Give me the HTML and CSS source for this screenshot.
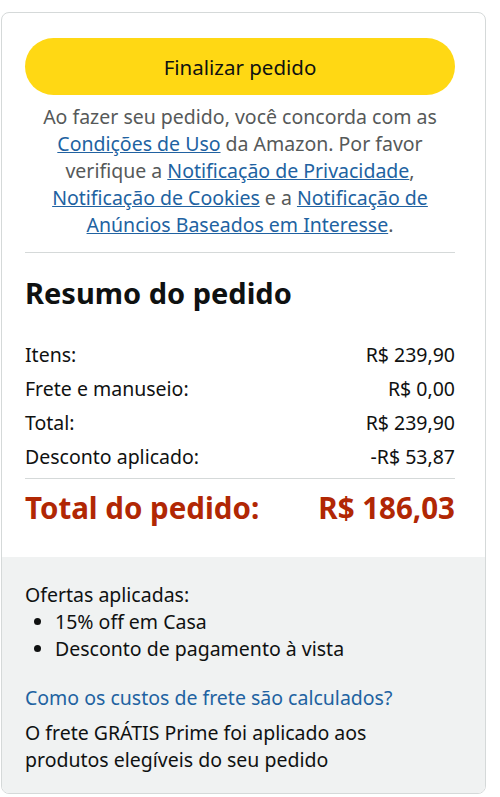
FILE: index.html
```html
<!DOCTYPE html>
<html lang="pt-BR">
<head>
<meta charset="utf-8">
<link rel="stylesheet" href="styles.css">
</head>
<body>
<div class="card">
  <div class="top">
    <button class="btn">Finalizar pedido</button>
    <p class="legal">Ao fazer seu pedido, você concorda com as <a href="#">Condições de Uso</a> da Amazon. Por favor verifique a <a href="#">Notificação de Privacidade</a>, <a href="#">Notificação de Cookies</a> e a <a href="#">Notificação de Anúncios Baseados em Interesse</a>.</p>
    <hr class="rule">
    <h2 class="title">Resumo do pedido</h2>
    <div class="rows">
      <div class="row"><span>Itens:</span><span>R$ 239,90</span></div>
      <div class="row"><span>Frete e manuseio:</span><span>R$ 0,00</span></div>
      <div class="row"><span>Total:</span><span>R$ 239,90</span></div>
      <div class="row"><span>Desconto aplicado:</span><span>-R$ 53,87</span></div>
    </div>
    <hr class="rule rule-tight">
    <div class="grand"><span>Total do pedido:</span><span>R$ 186,03</span></div>
  </div>
  <div class="bottom">
    <div class="offers-title">Ofertas aplicadas:</div>
    <ul class="offers">
      <li>15% off em Casa</li>
      <li>Desconto de pagamento à vista</li>
    </ul>
    <a class="ship-link" href="#">Como os custos de frete são calculados?</a>
    <p class="ship-note">O frete GRÁTIS Prime foi aplicado aos produtos elegíveis do seu pedido</p>
  </div>
</div>
</body>
</html>
```
FILE: styles.css
```css
* { box-sizing: border-box; }
html, body { margin: 0; padding: 0; background: #fff; }
body {
  font-family: "Noto Sans", "Open Sans", Arial, sans-serif;
  color: #0F1111;
  width: 500px;
  height: 797px;
  overflow: hidden;
}
.card {
  margin: 12px 0 0 1px;
  width: 485px;
  border: 1px solid #D5D9D9;
  border-radius: 8px;
  overflow: hidden;
}
.top {
  padding: 25px 30px 31px 23px;
}
.btn {
  display: block;
  width: 100%;
  height: 57px;
  border: none;
  border-radius: 30px;
  background: #FFD814;
  color: #0F1111;
  font-family: inherit;
  font-size: 20.5px;
  padding: 0;
}
.legal {
  margin: 8px 0 0;
  text-align: center;
  font-size: 19.5px;
  line-height: 27px;
  color: #565959;
}
.legal a { color: #2162A1; text-decoration: underline; }
.rule {
  border: none;
  border-top: 1px solid #D5D9D9;
  margin: 14px 0 0;
}
.title {
  margin: 20px 0 0;
  font-size: 29px;
  line-height: 40px;
  font-weight: 700;
}
.rows {
  margin-top: 25px;
  display: flex;
  flex-direction: column;
}
.row {
  display: flex;
  justify-content: space-between;
  font-size: 19.5px;
  line-height: 34px;
}
.rule-tight { margin-top: 4px; }
.grand {
  display: flex;
  justify-content: space-between;
  margin-top: 11px;
  font-size: 29.5px;
  line-height: 36px;
  font-weight: 700;
  color: #B12704;
}
.bottom {
  background: #F0F2F2;
  padding: 24px 30px 20px 23px;
}
.offers-title { font-size: 19.5px; line-height: 27px; }
.offers {
  margin: 0;
  padding-left: 30px;
  font-size: 19.5px;
  line-height: 27px;
}
.ship-link {
  display: block;
  margin-top: 22px;
  color: #2162A1;
  text-decoration: none;
  font-size: 19.5px;
  line-height: 27px;
}
.ship-note {
  margin: 8px 0 0;
  font-size: 19.5px;
  line-height: 27px;
}
```
